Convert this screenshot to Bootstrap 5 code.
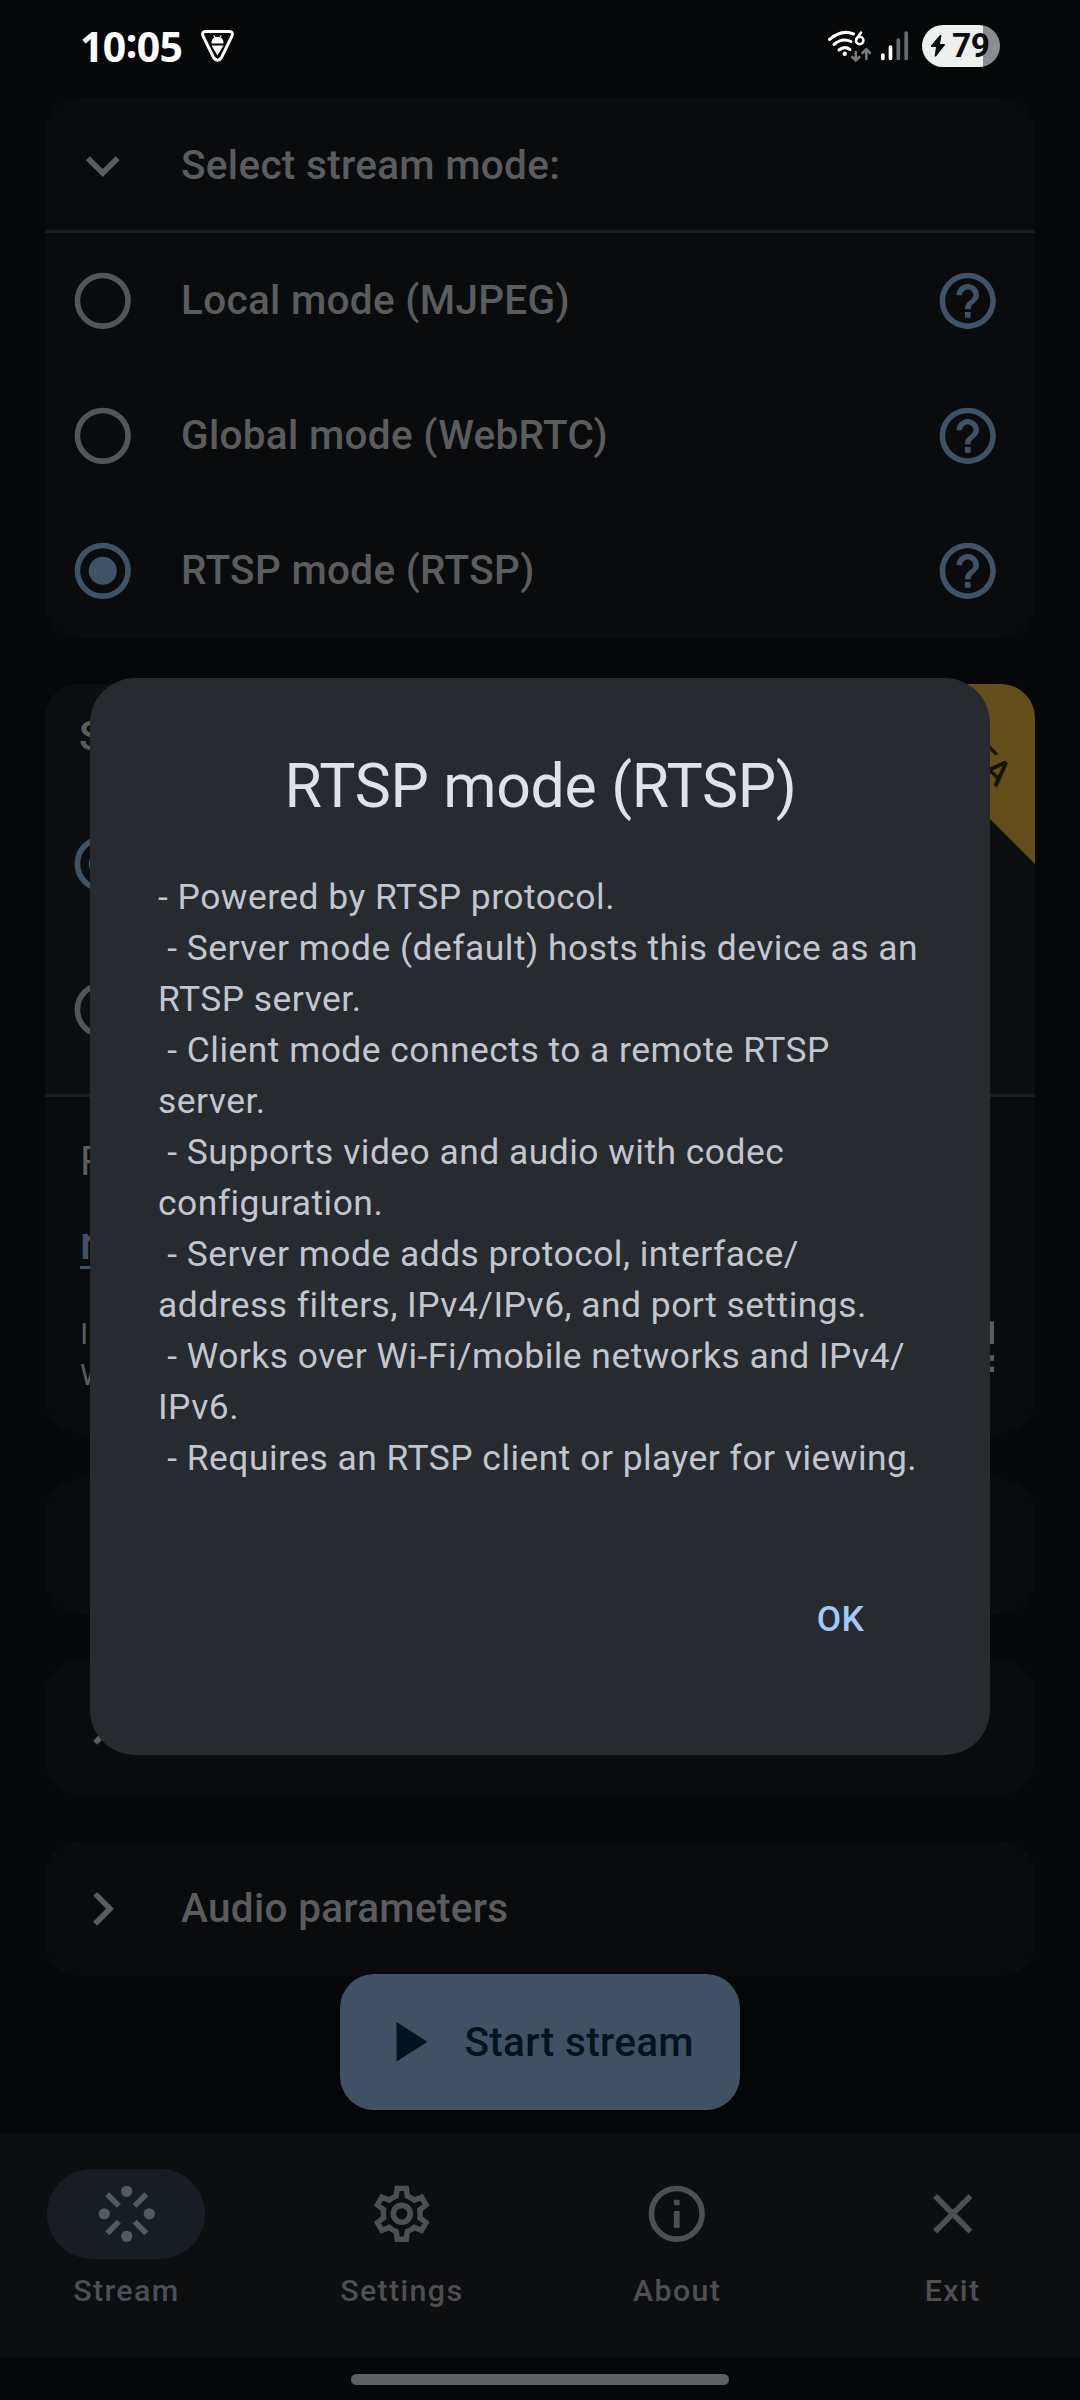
<!DOCTYPE html>
<html lang="en">
<head>
<meta charset="utf-8">
<meta name="viewport" content="width=device-width, initial-scale=1">
<title>Stream</title>
<link href="https://cdn.jsdelivr.net/npm/bootstrap@5.3.0/dist/css/bootstrap.min.css" rel="stylesheet">
<style>
  body { margin: 0; background: #050709; font-family: Roboto, sans-serif; }
  svg { display: block; flex: none; }
  .screen { width: 1080px; height: 2400px; background: #050709; }
  .status-bar { height: 98px; padding: 0 80px 6px 80px; color: #fff; }
  .clock { font: 700 41px/50px "Noto Sans", sans-serif; letter-spacing: -.6px; }
  .clock span { position: relative; top: -4px; }
  .clock-icon { margin-left: 17px; }
  .signal-icon { margin-left: 7px; }
  .battery { width: 78px; height: 42px; border-radius: 21px; background: linear-gradient(90deg, #eef0f0 61px, #8b8c8e 61px); color: #0b0d0f; margin-left: 12px; }
  .battery svg { margin: 0 7px 0 9px; }
  .battery-level { font: 700 33.5px/42px Roboto, sans-serif; letter-spacing: -.5px; }

  .content-area { height: 2035px; padding: 0 45px; gap: 46px; }
  .panel { background: #090b0d; border: 0; border-radius: 34px; color: #5b5c5e; flex: none; overflow: hidden; }
  .panel-row { height: 135px; padding: 0 34px 0 23.5px; gap: 45px; font-size: 40.5px; font-weight: 500; line-height: 54px; letter-spacing: .3px; }
  .panel-row .row-text { padding-bottom: 1px; }
  .ruled { border-bottom: 3px solid #1b1c1e; padding-top: 3px; }
  .icon-24 { width: 67.5px; height: 67.5px; }
  .muted-icon { color: #545558; }
  .accent { color: #3f5266; }

  .server-panel { height: 749px; }
  .server-top { height: 413px; background: #0c0e11; border-bottom: 3px solid #1b1c1e; padding: 25px 0 0 24px; }
  .server-title { font-size: 40.5px; font-weight: 500; line-height: 54px; padding-left: 10px; margin-bottom: 67px; }
  .server-top .muted-icon { margin-top: 78.5px; }
  .server-bottom { padding: 34px 33px 0 35px; font-size: 40.5px; line-height: 60px; }
  .server-link { font-size: 45.5px; font-weight: 500; line-height: 60px; margin-top: 23px; width: 40px; border-bottom: 3px solid #3f5266; height: 55px; }
  .server-meta { font-size: 30.4px; line-height: 41px; margin-top: 44px; }
  .beta-ribbon { top: 0; right: 0; }

  .start-btn { left: 340px; top: 1974px; width: 400px; height: 136px; border-radius: 34px; background: #405165; color: #00131f; font-size: 40.5px; font-weight: 500; letter-spacing: .3px; padding: 0 0 0 34px; gap: 23px; border: 0; box-shadow: 0 8px 10px -2px rgba(0,0,0,.35); }

  .bottom-nav { height: 225px; background: #0c0e10; padding: 35.5px 1px 0 0; gap: 22.5px; color: #4e4f52; }
  .nav-entry { flex: 1 1 0; font-size: 30.4px; font-weight: 500; line-height: 41px; letter-spacing: 1.35px; gap: 10.5px; }
  .nav-pill { width: 158px; height: 90.5px; border-radius: 46px; }
  .nav-entry.current { color: #48515a; }
  .current .nav-pill { background: #181d24; color: #555961; }
  .gesture { height: 42px; padding-top: 16px; }
  .gesture div { width: 378px; height: 11px; border-radius: 6px; background: #5f6062; }

  .dialog-box { left: 90px; top: 678px; width: 900px; height: 1076.5px; border-radius: 45px; background: #272a2f; padding: 67.5px 67px 0 68px; }
  .dialog-title { font-size: 60.75px; line-height: 81px; font-weight: 400; letter-spacing: -.3px; color: #e1e2e8; margin: 0 0 45px; }
  .dialog-text { font-size: 35.4px; line-height: 51px; letter-spacing: .49px; color: #c2c6cf; white-space: pre; }
  .dialog-ok { font-size: 35.4px; line-height: 51px; font-weight: 500; color: #a1c9f9; margin-top: 110px; padding-right: 59px; letter-spacing: .25px; }
</style>
<script src="https://cdn.jsdelivr.net/npm/bootstrap@5.3.0/dist/js/bootstrap.bundle.min.js"></script>
</head>
<body>
<svg width="0" height="0" class="position-absolute">
  <symbol id="i-help" viewBox="0 0 24 24"><path fill="currentColor" d="M11,18h2v-2h-2v2zM12,2C6.48,2 2,6.48 2,12s4.48,10 10,10 10,-4.48 10,-10S17.52,2 12,2zM12,20c-4.41,0 -8,-3.59 -8,-8s3.59,-8 8,-8 8,3.59 8,8 -3.59,8 -8,8zM12,6c-2.21,0 -4,1.79 -4,4h2c0,-1.1 0.9,-2 2,-2s2,0.9 2,2c0,2 -3,1.75 -3,5h2c0,-2.25 3,-2.5 3,-5 0,-2.21 -1.79,-4 -4,-4z"/></symbol>
  <symbol id="i-radio" viewBox="0 0 24 24"><circle cx="12" cy="12" r="9" fill="none" stroke="currentColor" stroke-width="2"/></symbol>
  <symbol id="i-radio-on" viewBox="0 0 24 24"><circle cx="12" cy="12" r="9" fill="none" stroke="currentColor" stroke-width="2"/><circle cx="12" cy="12" r="5" fill="currentColor"/></symbol>
  <symbol id="i-right" viewBox="0 0 24 24"><path fill="currentColor" d="M8.59,16.59L13.17,12 8.59,7.41 10,6l6,6-6,6z"/></symbol>
</svg>

<div class="screen position-relative d-flex flex-column overflow-hidden">
  <header class="status-bar d-flex align-items-center justify-content-between">
    <div class="d-flex align-items-center">
      <div class="clock">10<span>:</span>05</div>
      <svg class="clock-icon" width="37" height="36" viewBox="0 0 36 36">
        <path d="M6 3.500H30Q34 3.500 32.500 8L22 29.500Q18 35 14 29.500L3.500 8Q2 3.500 6 3.500Z" fill="none" stroke="#fff" stroke-width="3"/>
        <path d="M12 15.500Q12 10.500 15 9.500L13.500 7.500H15L16 9H20L21 7.500H22.500L21 9.500Q24 10.500 24 15.500ZM12 17.500H24L18 27.500Z" fill="#fff"/>
      </svg>
    </div>
    <div class="d-flex align-items-center">
      <svg width="44" height="38" viewBox="827 28 44 38" fill="none" stroke-linecap="round">
        <path d="M829.500 40.500Q841.500 30 853.500 35M834 45.500Q842 38.500 851 42.500M839 51Q844.500 46.500 850 50.500" stroke="#fff" stroke-width="3"/>
        <circle cx="844.700" cy="54.800" r="2.200" fill="#fff"/>
        <path d="M861 33.500L856.500 40" stroke="#fff" stroke-width="2.500"/>
        <circle cx="859.700" cy="41.500" r="3.700" stroke="#fff" stroke-width="2.500"/>
        <path d="M855.800 53V61M852.300 58L855.800 61.500L859.300 58M866.300 60V51M862.500 54L866.300 50.300L870 54" stroke="#77797a" stroke-width="2.600"/>
      </svg>
      <svg class="signal-icon" width="32" height="38" viewBox="878 28 32 38" stroke-width="3.700" stroke-linecap="round">
        <path d="M882.800 56V59.500M890.500 48V59.500" stroke="#fff"/><path d="M898.300 41V59.500M906.200 34V59.500" stroke="#696a6b"/>
      </svg>
      <div class="battery d-flex align-items-center">
        <svg width="14" height="22" viewBox="0 0 14 22"><path fill="currentColor" d="M9 0L0 10.500Q-.5 12 1 12H5L3.500 21.500H5L14 10Q14.500 9 13 9H9L10.500 0Z"/></svg>
        <span class="battery-level">79</span>
      </div>
    </div>
  </header>

  <main class="content-area d-flex flex-column">
    <section class="card panel">
      <div class="panel-row ruled d-flex align-items-center">
        <svg class="icon-24" viewBox="0 0 24 24"><path fill="currentColor" d="M16.590,8.590L12,13.170 7.410,8.590 6,10l6,6 6,-6z"/></svg>
        <span class="row-text">Select stream mode:</span>
      </div>
      <div class="panel-row d-flex align-items-center">
        <svg class="icon-24 muted-icon"><use href="#i-radio"/></svg>
        <span class="row-text flex-grow-1">Local mode (MJPEG)</span>
        <svg class="icon-24 accent"><use href="#i-help"/></svg>
      </div>
      <div class="panel-row d-flex align-items-center">
        <svg class="icon-24 muted-icon"><use href="#i-radio"/></svg>
        <span class="row-text flex-grow-1">Global mode (WebRTC)</span>
        <svg class="icon-24 accent"><use href="#i-help"/></svg>
      </div>
      <div class="panel-row d-flex align-items-center">
        <svg class="icon-24 accent"><use href="#i-radio-on"/></svg>
        <span class="row-text flex-grow-1">RTSP mode (RTSP)</span>
        <svg class="icon-24 accent"><use href="#i-help"/></svg>
      </div>
    </section>

    <section class="card panel server-panel position-relative">
      <div class="server-top">
        <div class="server-title">S</div>
        <svg class="icon-24 accent"><use href="#i-radio-on"/></svg>
        <svg class="icon-24 muted-icon"><use href="#i-radio"/></svg>
      </div>
      <div class="server-bottom">
        <div>R</div>
        <div class="server-link accent">r</div>
        <div class="server-meta d-flex justify-content-between">
          <div>I<br>W</div>
          <svg class="icon-24" viewBox="0 0 24 24"><path fill="currentColor" fill-rule="evenodd" d="M3 11h8V3H3zM5 5h4v4H5zM3 21h8v-8H3zM5 15h4v4H5zM13 3v8h8V3zM19 9h-4V5h4zM19 19h2v2h-2zM13 13h2v2h-2zM15 15h2v2h-2zM13 17h2v2h-2zM15 19h2v2h-2zM17 17h2v2h-2zM17 13h2v2h-2zM19 15h2v2h-2z"/></svg>
        </div>
      </div>
      <svg class="beta-ribbon position-absolute" width="190" height="190" viewBox="0 0 190 190">
        <path d="M10 0H190V180Z" fill="#644f1b"/>
        <text transform="translate(129.500 64) rotate(45)" x="0" y="12.500" text-anchor="middle" font-family="Roboto" font-size="35.400" font-weight="500" letter-spacing="1" fill="#171200">BETA</text>
      </svg>
    </section>

    <section class="card panel"><div class="panel-row"></div></section>

    <section class="card panel">
      <div class="panel-row d-flex align-items-center"><svg class="icon-24"><use href="#i-right"/></svg></div>
    </section>

    <section class="card panel">
      <div class="panel-row d-flex align-items-center">
        <svg class="icon-24"><use href="#i-right"/></svg>
        <span class="row-text">Audio parameters</span>
      </div>
    </section>
  </main>

  <nav class="bottom-nav d-flex">
    <div class="nav-entry current d-flex flex-column align-items-center">
      <div class="nav-pill d-flex align-items-center justify-content-center">
        <svg class="icon-24" viewBox="0 0 24 24"><g fill="currentColor"><circle cx="12" cy="4" r="2"/><circle cx="12" cy="20" r="2"/><circle cx="4" cy="12" r="2"/><circle cx="20" cy="12" r="2"/></g><path stroke="currentColor" stroke-width="2" d="M5.050 5.050L9.200 9.200M18.950 5.050L14.800 9.200M5.050 18.950L9.200 14.800M18.950 18.950L14.800 14.800"/></svg>
      </div>
      <span>Stream</span>
    </div>
    <div class="nav-entry d-flex flex-column align-items-center">
      <div class="nav-pill d-flex align-items-center justify-content-center">
        <svg class="icon-24" viewBox="0 0 24 24" fill="none" stroke="currentColor">
          <defs>
            <path id="gear" d="M19.460 12.990L21.900 14.900L19.470 19.120L16.600 17.950C16.080 18.350 15.500 18.700 14.880 18.950L14.440 22H9.560L9.120 18.950C8.500 18.700 7.920 18.350 7.400 17.950L4.530 19.120L2.100 14.900L4.540 12.990C4.470 12.330 4.470 11.670 4.540 11.010L2.100 9.100L4.530 4.880L7.400 6.050C7.920 5.650 8.500 5.300 9.120 5.050L9.560 2H14.440L14.880 5.050C15.500 5.300 16.080 5.650 16.600 6.050L19.470 4.880L21.900 9.100L19.460 11.010C19.530 11.670 19.530 12.330 19.460 12.990Z"/>
            <clipPath id="gear-clip"><use href="#gear"/></clipPath>
          </defs>
          <use href="#gear" clip-path="url(#gear-clip)" stroke-width="3.900"/>
          <circle cx="12" cy="12" r="3" stroke-width="2"/>
        </svg>
      </div>
      <span>Settings</span>
    </div>
    <div class="nav-entry d-flex flex-column align-items-center">
      <div class="nav-pill d-flex align-items-center justify-content-center">
        <svg class="icon-24" viewBox="0 0 24 24"><circle cx="12" cy="12" r="9" fill="none" stroke="currentColor" stroke-width="2"/><path fill="currentColor" d="M11 7h2v2h-2zM11 11h2v6h-2z"/></svg>
      </div>
      <span>About</span>
    </div>
    <div class="nav-entry d-flex flex-column align-items-center">
      <div class="nav-pill d-flex align-items-center justify-content-center">
        <svg class="icon-24" viewBox="0 0 24 24"><path fill="currentColor" d="M19,6.410L17.590,5 12,10.590 6.410,5 5,6.410 10.590,12 5,17.590 6.410,19 12,13.410 17.590,19 19,17.590 13.410,12z"/></svg>
      </div>
      <span>Exit</span>
    </div>
  </nav>
  <div class="gesture d-flex justify-content-center"><div></div></div>

  <button type="button" class="btn start-btn position-absolute d-flex align-items-center">
    <svg class="icon-24" viewBox="0 0 24 24"><path fill="currentColor" d="M8,5v14l11,-7z"/></svg>
    <span>Start stream</span>
  </button>

  <div class="dialog-box position-absolute d-flex flex-column" role="dialog">
    <h1 class="dialog-title text-center">RTSP mode (RTSP)</h1>
    <div class="dialog-text">- Powered by RTSP protocol.
 - Server mode (default) hosts this device as an
RTSP server.
 - Client mode connects to a remote RTSP
server.
 - Supports video and audio with codec
configuration.
 - Server mode adds protocol, interface/
address filters, IPv4/IPv6, and port settings.
 - Works over Wi-Fi/mobile networks and IPv4/
IPv6.
 - Requires an RTSP client or player for viewing.</div>
    <div class="dialog-ok text-end">OK</div>
  </div>
</div>
</body>
</html>
